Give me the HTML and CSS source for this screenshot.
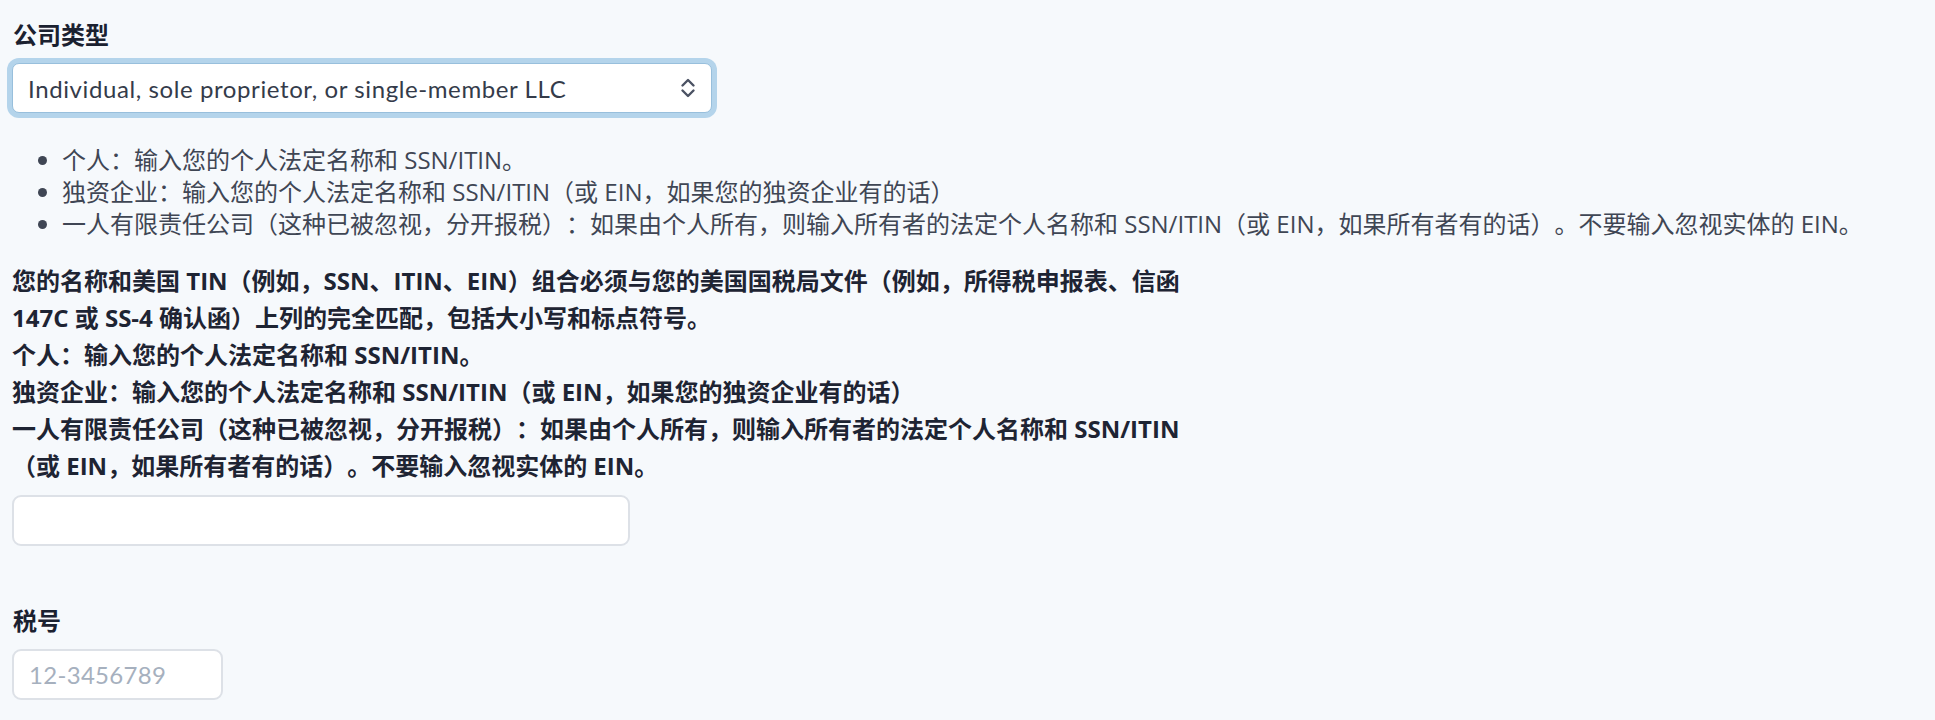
FILE: index.html
```html
<!DOCTYPE html>
<html lang="zh-CN">
<head>
<meta charset="utf-8">
<title>公司类型</title>
<link rel="stylesheet" href="styles.css">
</head>
<body>
<form class="form">
  <label class="field-label" for="ctype">公司类型</label>
  <div class="select-wrap">
    <select id="ctype" class="select">
      <option>Individual, sole proprietor, or single-member LLC</option>
    </select>
    <svg class="select-arrows" width="16" height="22" viewBox="0 0 16 22" aria-hidden="true">
      <path d="M2.5 8.5 L8 3 L13.5 8.5" fill="none" stroke="#4b5263" stroke-width="2.4" stroke-linecap="round" stroke-linejoin="round"/>
      <path d="M2.5 13.5 L8 19 L13.5 13.5" fill="none" stroke="#4b5263" stroke-width="2.4" stroke-linecap="round" stroke-linejoin="round"/>
    </svg>
  </div>
  <ul class="hints">
    <li>个人：输入您的个人法定名称和 SSN/ITIN。</li>
    <li>独资企业：输入您的个人法定名称和 SSN/ITIN（或 EIN，如果您的独资企业有的话）</li>
    <li>一人有限责任公司（这种已被忽视，分开报税）：如果由个人所有，则输入所有者的法定个人名称和 SSN/ITIN（或 EIN，如果所有者有的话）。不要输入忽视实体的 EIN。</li>
  </ul>
  <p class="notice">您的名称和美国 TIN（例如，SSN、ITIN、EIN）组合必须与您的美国国税局文件（例如，所得税申报表、信函 147C 或 SS-4 确认函）上列的完全匹配，包括大小写和标点符号。<br>个人：输入您的个人法定名称和 SSN/ITIN。<br>独资企业：输入您的个人法定名称和 SSN/ITIN（或 EIN，如果您的独资企业有的话）<br>一人有限责任公司（这种已被忽视，分开报税）：如果由个人所有，则输入所有者的法定个人名称和 SSN/ITIN（或 EIN，如果所有者有的话）。不要输入忽视实体的 EIN。</p>
  <input class="text-input wide" type="text" aria-label="名称">
  <label class="field-label tax-label" for="tax">税号</label>
  <input id="tax" class="text-input narrow" type="text" placeholder="12-3456789">
</form>
</body>
</html>
```
FILE: styles.css
```css
html, body {
  margin: 0;
  background: #f6f9fc;
}

body {
  padding: 16px 12px 0 12px;
  font-family: "Open Sans", "Noto Sans CJK SC", sans-serif;
  font-size: 24px;
  color: #1e2433;
  text-spacing-trim: space-all;
}

.form {
  display: flex;
  flex-direction: column;
  align-items: flex-start;
}

.field-label {
  display: block;
  font-family: "Noto Sans CJK SC", sans-serif;
  font-weight: 700;
  font-size: 24px;
  line-height: 36px;
  color: #1b2130;
  padding-left: 1px;
}

.select-wrap {
  position: relative;
  margin-top: 11px;
  width: 700px;
}

.select {
  -webkit-appearance: none;
  appearance: none;
  display: block;
  width: 700px;
  height: 50px;
  box-sizing: border-box;
  margin: 0;
  padding: 0 50px 0 15px;
  font-family: "Lato", "Noto Sans CJK SC", sans-serif;
  font-size: 24px;
  letter-spacing: 0.6px;
  color: #343b4a;
  background: #ffffff;
  border: 1px solid #98bfdc;
  border-radius: 7px;
  box-shadow: 0 0 0 5px #b4d4eb, 0 2px 2px 0 rgba(90, 120, 150, 0.25);
  outline: none;
}

.select-arrows {
  position: absolute;
  right: 16px;
  top: 14px;
  pointer-events: none;
}

.hints {
  margin: 31px 0 0 0;
  padding-left: 50px;
  font-family: "Open Sans", "Noto Sans CJK SC", sans-serif;
  font-size: 24px;
  line-height: 32px;
  color: #3f4654;
  white-space: nowrap;
  text-spacing-trim: space-all;
}

.notice {
  margin: 22px 0 0 0;
  max-width: 1200px;
  font-family: "Open Sans", "Noto Sans CJK SC", sans-serif;
  font-weight: 700;
  font-size: 24px;
  line-height: 37px;
  color: #1e2433;
  text-spacing-trim: space-all;
}

.text-input {
  display: block;
  box-sizing: border-box;
  height: 51px;
  margin: 11px 0 0 0;
  padding: 0 15px;
  font-family: "Lato", "Noto Sans CJK SC", sans-serif;
  font-size: 24px;
  letter-spacing: 0.3px;
  color: #1e2433;
  background: #ffffff;
  border: 2px solid #dde1e7;
  border-radius: 9px;
  outline: none;
}

.text-input::placeholder {
  color: #a6b0be;
}

.wide {
  width: 618px;
}

.tax-label {
  margin-top: 56px;
}

.narrow {
  width: 211px;
}
```
